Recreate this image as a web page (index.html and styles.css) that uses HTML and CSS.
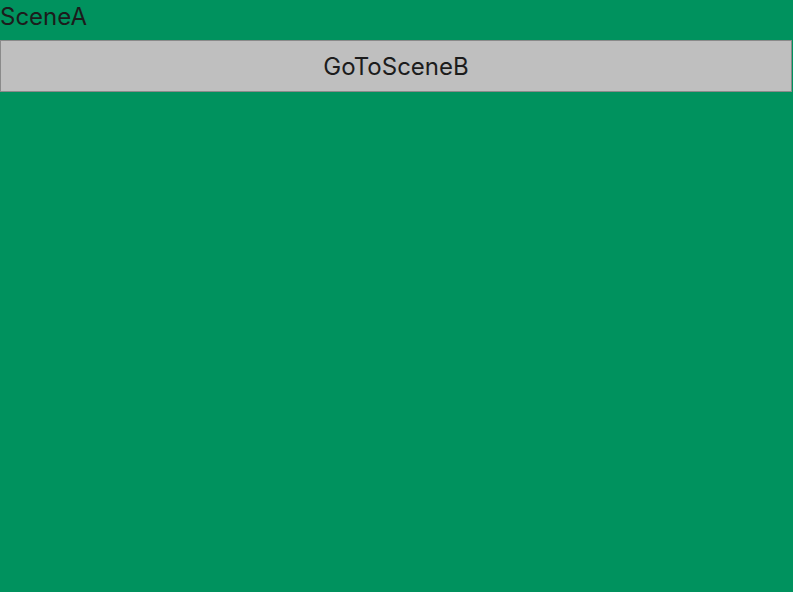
FILE: index.html
```html
<!DOCTYPE html>
<html>
<head>
<meta charset="utf-8">
<link rel="stylesheet" href="styles.css">
</head>
<body>
<div class="scene">
  <div class="title">SceneA</div>
  <button class="btn">GoToSceneB</button>
</div>
</body>
</html>
```
FILE: styles.css
```css
html, body {
  margin: 0;
  padding: 0;
  background: #00925e;
  height: 100%;
}
.scene {
  display: flex;
  flex-direction: column;
  width: 792px;
  font-family: Inter, "Noto Sans", sans-serif;
  color: #1c1c1c;
}
.title {
  font-size: 24px;
  line-height: 34px;
  height: 40px;
}
.btn {
  box-sizing: border-box;
  width: 792px;
  height: 52px;
  margin: 0;
  background: #bfbfbf;
  border: 1px solid #8a8a8a;
  font-family: Inter, "Noto Sans", sans-serif;
  font-size: 24px;
  color: #1c1c1c;
  padding: 0;
}
```
